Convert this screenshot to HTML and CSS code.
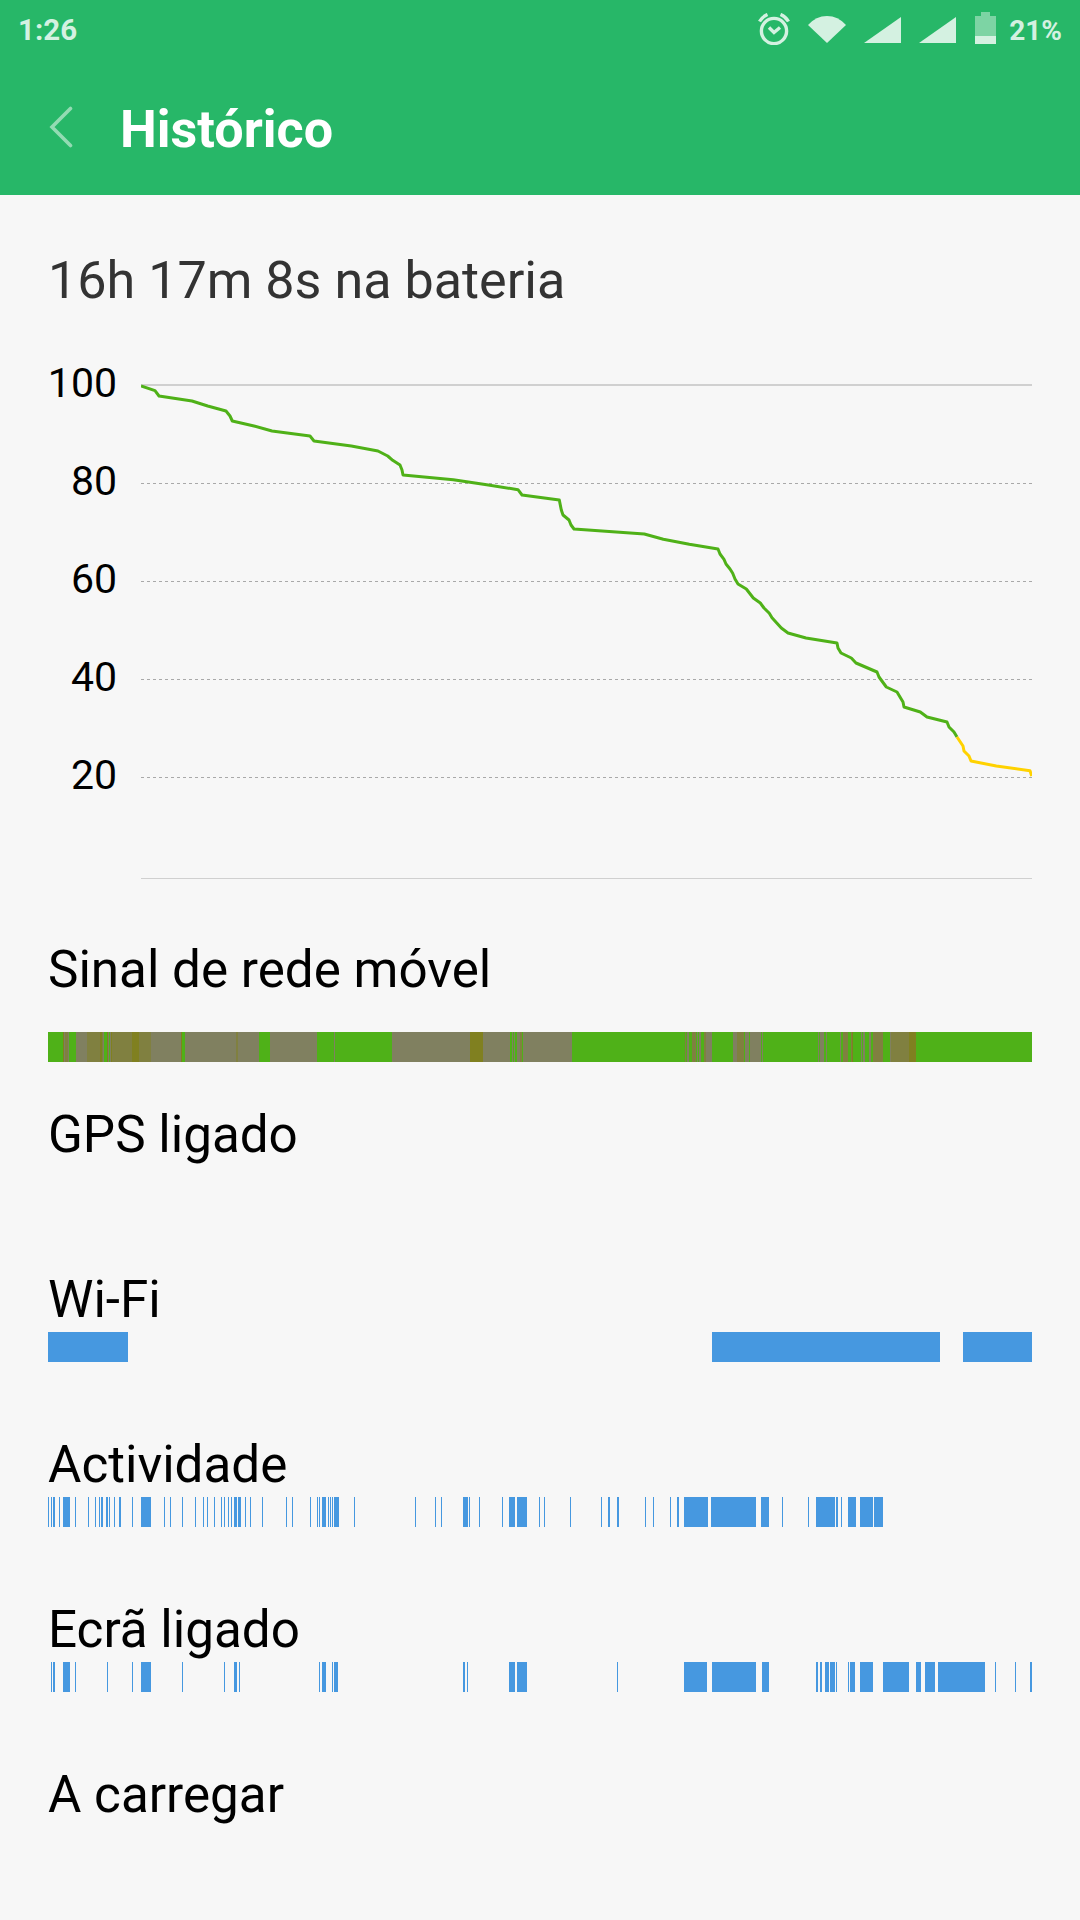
FILE: index.html
```
<!DOCTYPE html>
<html lang="pt">
    <head>
        <meta charset="UTF-8">
        <meta name="viewport" content="width=device-width, initial-scale=1.0">
        <title>Histórico</title>
        <link rel="stylesheet" href="styles.css">
    </head>

    <body>

        <!-- Barra de estado -->

        <header class="header">
            <div class="status-bar">
                <span class="time">1:26</span>
                <div class="status-icons">
                    <svg class="icon-alarm" width="32" height="32" viewBox="0 0 32 32">
                        <circle cx="16" cy="18" r="12.6"/>
                        <path d="M11 14.500l5 5 6-5M1.500 8.500Q4.500 3.500 9.500 1.500M30.500 8.500Q27.500 3.500 22.500 1.500"/>
                    </svg>
                    <svg class="icon-wifi" width="38" height="27" viewBox="0 0 38 27">
                        <path d="M0 9Q8 0 19 0T38 9L19 27z"/>
                    </svg>
                    <svg class="icon-signal" width="37" height="26" viewBox="0 0 37 26">
                        <path d="M0 26L37 0V26z"/>
                    </svg>
                    <svg class="icon-signal" width="37" height="26" viewBox="0 0 37 26">
                        <path d="M0 26L37 0V26z"/>
                    </svg>
                    <svg class="icon-battery" width="21" height="32" viewBox="0 0 21 32">
                        <path class="empty" d="M6 0h9v4h6v20H0V4h6z"/>
                        <path d="M0 24h21v8H0z"/>
                    </svg>
                    <span class="percent">21%</span>
                </div>
            </div>
            <div class="title-bar">
                <svg class="back" width="24" height="42" viewBox="0 0 24 42">
                    <path d="M21.500 2.500L3 21l18.500 18.500"/>
                </svg>
                <h1>Histórico</h1>
            </div>
        </header>

        <main>

        <h2 class="duration">16h 17m 8s na bateria</h2>

        <!-- Gráfico da bateria -->

        <div class="chart">
            <div class="axis">
                <span>100</span>
                <span>80</span>
                <span>60</span>
                <span>40</span>
                <span>20</span>
            </div>
            <svg class="plot" width="891" height="500" viewBox="0 0 891 500">
                <path class="line-top" d="M0 5h891"/>
                <path class="line-bottom" d="M0 498.500h891"/>
                <path class="grid" d="M0 103.500h891M0 201.500h891M0 299.500h891M0 397.500h891"/>
                <polyline class="level" points="0,6 14,10.700 18,16 51,21 66.700,26 85,31 89,36 91.300,41 113,46 131,51 169,56 173,61 210.300,66 237,71 246.700,76 251.700,80.300 259,85 261,90 262,95 312.300,99.700 345.700,104.700 377,109.700 381,115 418.300,120 420.300,130 422,135 428,140 430,145 433,149 503.300,154 522.300,159.300 548.300,164.300 577,169 579,174 583,179.300 585,184 589,189 591.700,193.300 594,199 597,204 605.300,209 612.300,218 619.300,223 623,228 628.300,233.300 631,237.700 640.300,248 647,253 665,258 696,263 697,268 700,273 710.300,278 715,283 736,292 738,297 745.300,307 756,312 762,322 763,327 779.300,332 786,337 806,342 808,347 813,352 816,357"/>
                <polyline class="level low" points="816,357 822,366 823,371 828,376 830,381 855.300,386 889,390.700 890.700,396"/>
            </svg>
        </div>

        <!-- Linhas de actividade -->

        <div class="row signal">
            <h3>Sinal de rede móvel</h3>
            <svg class="strip" width="984" height="30" viewBox="0 0 984 30">
                <path class="good" d="M0 0h984v30H0z"/>
                <path class="medium" d="M16 0h1v30h-1zM20 0h1v30h-1zM28 0h11v30h-11zM55 0h1v30h-1zM60 0h1v30h-1zM62 0h1v30h-1zM103 0h30v30h-30zM137 0h51v30h-51zM190 0h21v30h-21zM222 0h47v30h-47zM286 0h1v30h-1zM344 0h78v30h-78zM435 0h27v30h-27zM464 0h1v30h-1zM466 0h1v30h-1zM469 0h3v30h-3zM475 0h49v30h-49zM639 0h2v30h-2zM649 0h1v30h-1zM651 0h2v30h-2zM658 0h6v30h-6zM685 0h4v30h-4zM697 0h4v30h-4zM702 0h11v30h-11zM714 0h1v30h-1zM770 0h1v30h-1zM772 0h4v30h-4zM778 0h1v30h-1zM792 0h1v30h-1zM813 0h1v30h-1zM815 0h2v30h-2zM821 0h2v30h-2zM842 0h1v30h-1z"/>
                <path class="weak" d="M17 0h3v30h-3zM39 0h13v30h-13zM54 0h1v30h-1zM64 0h20v30h-20zM91 0h12v30h-12zM188 0h2v30h-2zM472 0h2v30h-2zM637 0h1v30h-1zM644 0h4v30h-4zM656 0h2v30h-2zM689 0h7v30h-7zM795 0h5v30h-5zM803 0h1v30h-1zM825 0h10v30h-10zM843 0h18v30h-18z"/>
                <path class="poor" d="M15 0h1v30h-1zM52 0h2v30h-2zM59 0h1v30h-1zM63 0h1v30h-1zM84 0h7v30h-7zM133 0h1v30h-1zM422 0h13v30h-13zM804 0h1v30h-1zM861 0h7v30h-7z"/>
            </svg>
        </div>

        <div class="row">
            <h3>GPS ligado</h3>
        </div>

        <div class="row">
            <h3>Wi-Fi</h3>
            <svg class="strip" width="984" height="30" viewBox="0 0 984 30">
                <path d="M0 0h80v30h-80zM664 0h228v30h-228zM915 0h69v30h-69z"/>
            </svg>
        </div>

        <div class="row">
            <h3>Actividade</h3>
            <svg class="strip" width="984" height="30" viewBox="0 0 984 30">
                <path d="M0 0h1v30h-1zM3 0h1v30h-1zM5 0h2v30h-2zM11 0h1v30h-1zM15 0h7v30h-7zM27 0h1v30h-1zM40 0h1v30h-1zM47 0h1v30h-1zM51 0h1v30h-1zM53 0h2v30h-2zM58 0h2v30h-2zM61 0h1v30h-1zM66 0h1v30h-1zM71 0h2v30h-2zM84 0h1v30h-1zM93 0h10v30h-10zM116 0h1v30h-1zM122 0h1v30h-1zM134 0h1v30h-1zM147 0h1v30h-1zM155 0h1v30h-1zM159 0h1v30h-1zM166 0h1v30h-1zM173 0h1v30h-1zM176 0h1v30h-1zM180 0h1v30h-1zM183 0h1v30h-1zM186 0h3v30h-3zM190 0h3v30h-3zM197 0h1v30h-1zM202 0h1v30h-1zM214 0h1v30h-1zM238 0h1v30h-1zM244 0h1v30h-1zM262 0h1v30h-1zM269 0h1v30h-1zM271 0h1v30h-1zM274 0h4v30h-4zM280 0h1v30h-1zM282 0h1v30h-1zM284 0h1v30h-1zM286 0h5v30h-5zM306 0h1v30h-1z"/>
                <path d="M367 0h1v30h-1zM387 0h1v30h-1zM393 0h1v30h-1zM415 0h5v30h-5zM421 0h1v30h-1zM431 0h1v30h-1zM454 0h1v30h-1zM461 0h6v30h-6zM469 0h10v30h-10zM491 0h1v30h-1zM496 0h1v30h-1zM522 0h1v30h-1zM553 0h1v30h-1zM560 0h2v30h-2zM569 0h2v30h-2zM597 0h1v30h-1zM605 0h1v30h-1zM622 0h1v30h-1zM629 0h2v30h-2zM636 0h24v30h-24zM663 0h45v30h-45zM713 0h8v30h-8zM734 0h1v30h-1zM760 0h1v30h-1zM768 0h19v30h-19zM788 0h2v30h-2zM793 0h1v30h-1zM800 0h8v30h-8zM812 0h13v30h-13zM826 0h9v30h-9z"/>
            </svg>
        </div>

        <div class="row">
            <h3>Ecrã ligado</h3>
            <svg class="strip" width="984" height="30" viewBox="0 0 984 30">
                <path d="M3 0h1v30h-1zM5 0h2v30h-2zM15 0h7v30h-7zM27 0h1v30h-1zM59 0h1v30h-1zM84 0h1v30h-1zM93 0h10v30h-10zM134 0h1v30h-1zM176 0h1v30h-1zM186 0h3v30h-3zM191 0h1v30h-1zM271 0h1v30h-1zM274 0h4v30h-4zM284 0h1v30h-1zM286 0h4v30h-4zM415 0h2v30h-2zM419 0h1v30h-1zM461 0h6v30h-6zM469 0h10v30h-10z"/>
                <path d="M569 0h1v30h-1zM636 0h23v30h-23zM664 0h44v30h-44zM714 0h7v30h-7zM768 0h2v30h-2zM772 0h2v30h-2zM777 0h4v30h-4zM782 0h5v30h-5zM788 0h1v30h-1zM800 0h1v30h-1zM802 0h5v30h-5zM812 0h13v30h-13zM835 0h26v30h-26zM868 0h5v30h-5zM877 0h10v30h-10zM890 0h47v30h-47zM947 0h1v30h-1zM967 0h1v30h-1zM982 0h2v30h-2z"/>
            </svg>
        </div>

        <div class="row">
            <h3>A carregar</h3>
        </div>

        </main>

    </body>

</html>
```
FILE: styles.css
```
* {
    box-sizing: border-box;
}

body {
    margin: 0;
    height: 1920px;
    overflow: hidden;
    background: #f7f7f7;
    color: #000;
    font-family: Roboto, sans-serif;
}

h1, h2, h3 {
    margin: 0;
    font-size: 52.1px;
    line-height: 60px;
    font-weight: 400;
}

svg {
    display: block;
}

/* Cabeçalho */

.header {
    height: 195px;
    background: #27b768;
    color: #fff;
}

.status-bar {
    display: flex;
    justify-content: space-between;
    height: 60px;
    padding: 0 18px;
    font-size: 29.5px;
    line-height: 60px;
    font-weight: 700;
    color: #d4f1e1;
}

.status-icons {
    display: flex;
    fill: #d4f1e1;
}

.percent {
    padding-top: 1px;
    font-size: 28px;
}

.icon-alarm {
    margin: 13px 18px 0 0;
    fill: none;
    stroke: #d4f1e1;
    stroke-width: 3.4;
}

.icon-wifi {
    margin: 16px 18px 0 0;
}

.icon-signal {
    margin: 17px 18px 0 0;
}

.icon-battery {
    margin: 12px 13px 0 1px;
}

.icon-battery .empty {
    fill: #7dd4a4;
}

.title-bar {
    display: flex;
    align-items: center;
    gap: 47px;
    height: 135px;
    padding: 0 0 1px 49px;
}

.title-bar h1 {
    padding-top: 6px;
    font-weight: 700;
}

.back {
    fill: none;
    stroke: #93dbb3;
    stroke-width: 3.6;
    stroke-linecap: round;
}

/* Conteúdo */

main {
    padding: 56px 48px 0;
}

.duration {
    color: #333;
}

/* Gráfico */

.chart {
    display: flex;
    justify-content: space-between;
    height: 560px;
    padding-top: 69px;
    margin-bottom: 69px;
}

.axis {
    display: flex;
    flex-direction: column;
    width: 69px;
    margin-top: -46px;
    text-align: right;
    font-size: 41px;
    line-height: 98px;
}

.axis span {
    margin-left: -10px;
}

.plot {
    fill: none;
}

.line-top {
    stroke: #d0d0d0;
    stroke-width: 2;
}

.line-bottom {
    stroke: #d0d0d0;
}

.grid {
    stroke: #a9a9a9;
    stroke-dasharray: 3 3;
}

.level {
    stroke: #4fb118;
    stroke-width: 3;
    stroke-linejoin: round;
}

.level.low {
    stroke: #ffd200;
}

/* Linhas */

.row {
    height: 165px;
}

.row h3 {
    font-size: 51.2px;
}

.strip {
    margin-top: 2px;
    fill: #4698e0;
    shape-rendering: crispEdges;
}

.signal .strip {
    margin-top: 32px;
}

.good {
    fill: #4fb118;
}

.medium {
    fill: #808060;
}

.weak {
    fill: #808040;
}

.poor {
    fill: #808020;
}
```
